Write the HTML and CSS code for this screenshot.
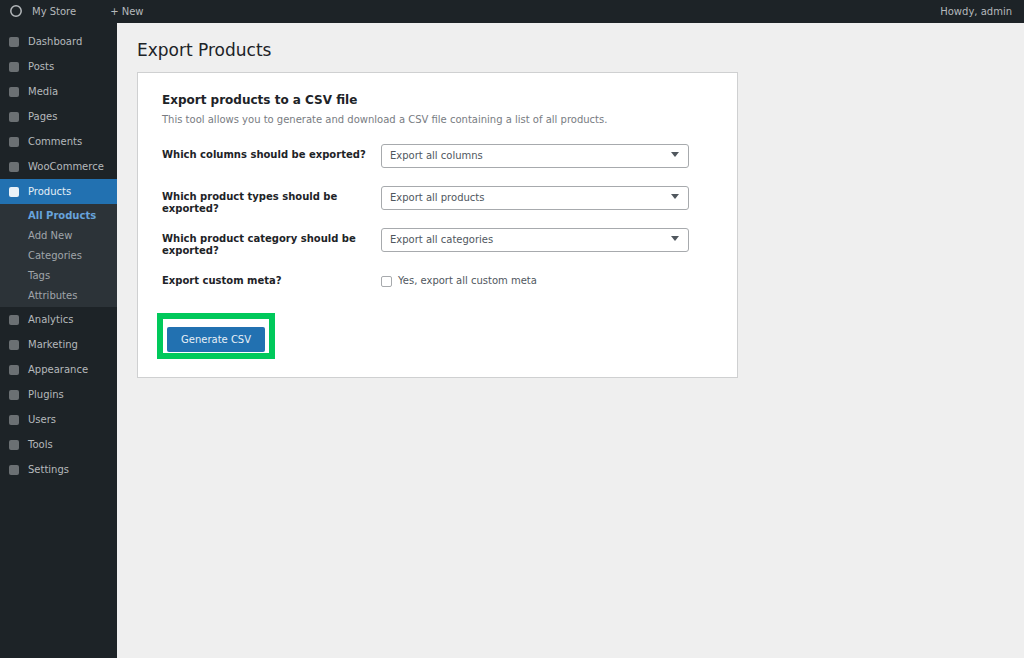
FILE: index.html
```html
<!DOCTYPE html>
<html lang="en">
<head>
<meta charset="utf-8">
<meta name="viewport" content="width=device-width, initial-scale=1">
<title>Export Products</title>
<link rel="stylesheet" href="styles.css">
</head>
<body>
<header class="topbar">
  <svg class="logo" viewBox="0 0 12 12" aria-hidden="true"><circle cx="6" cy="6" r="5.2" fill="none" stroke="currentColor" stroke-width="1.5"/></svg>
  <a class="site" href="#">My Store</a>
  <a class="new" href="#">+ New</a>
  <a class="account" href="#">Howdy, admin</a>
</header>
<div class="layout">
  <nav class="sidebar">
    <ul class="menu">
      <li><a class="item" href="#"><span class="icon"></span>Dashboard</a></li>
      <li><a class="item" href="#"><span class="icon"></span>Posts</a></li>
      <li><a class="item" href="#"><span class="icon"></span>Media</a></li>
      <li><a class="item" href="#"><span class="icon"></span>Pages</a></li>
      <li><a class="item" href="#"><span class="icon"></span>Comments</a></li>
      <li><a class="item" href="#"><span class="icon"></span>WooCommerce</a></li>
      <li>
        <a class="item active" href="#"><span class="icon"></span>Products</a>
        <ul class="submenu">
          <li><a class="subitem current" href="#">All Products</a></li>
          <li><a class="subitem" href="#">Add New</a></li>
          <li><a class="subitem" href="#">Categories</a></li>
          <li><a class="subitem" href="#">Tags</a></li>
          <li><a class="subitem" href="#">Attributes</a></li>
        </ul>
      </li>
      <li><a class="item" href="#"><span class="icon"></span>Analytics</a></li>
      <li><a class="item" href="#"><span class="icon"></span>Marketing</a></li>
      <li><a class="item" href="#"><span class="icon"></span>Appearance</a></li>
      <li><a class="item" href="#"><span class="icon"></span>Plugins</a></li>
      <li><a class="item" href="#"><span class="icon"></span>Users</a></li>
      <li><a class="item" href="#"><span class="icon"></span>Tools</a></li>
      <li><a class="item" href="#"><span class="icon"></span>Settings</a></li>
    </ul>
  </nav>
  <main class="content">
    <h1 class="title">Export Products</h1>
    <form class="card">
      <h2 class="heading">Export products to a CSV file</h2>
      <p class="intro">This tool allows you to generate and download a CSV file containing a list of all products.</p>
      <div class="fields">
        <div class="row">
          <label class="label" for="columns">Which columns should be exported?</label>
          <div class="control"><select class="select" id="columns"><option>Export all columns</option></select></div>
        </div>
        <div class="row">
          <label class="label" for="types">Which product types should be exported?</label>
          <div class="control"><select class="select" id="types"><option>Export all products</option></select></div>
        </div>
        <div class="row">
          <label class="label" for="category">Which product category should be exported?</label>
          <div class="control"><select class="select" id="category"><option>Export all categories</option></select></div>
        </div>
        <div class="row">
          <span class="label" id="meta-label">Export custom meta?</span>
          <label class="check"><input class="checkbox" type="checkbox" aria-describedby="meta-label">Yes, export all custom meta</label>
        </div>
      </div>
      <div class="highlight"><button class="button" type="button">Generate CSV</button></div>
    </form>
  </main>
</div>
</body>
</html>
```
FILE: styles.css
```css
* {
  box-sizing: border-box;
}

body {
  margin: 0;
  min-height: 100vh;
  display: flex;
  flex-direction: column;
  background: #efefef;
  color: #1d2327;
  font-family: "DejaVu Sans", Verdana, sans-serif;
  font-size: 10px;
}

a {
  color: inherit;
  text-decoration: none;
}

ul {
  list-style: none;
  margin: 0;
  padding: 0;
}

.topbar {
  display: flex;
  align-items: center;
  height: 23px;
  padding: 0 12px 0 10px;
  background: #1d2327;
  color: #b5b9bc;
}

.logo {
  width: 12px;
  height: 12px;
  margin: 0 10px 2px 0;
}

.new {
  margin-left: 34px;
}

.account {
  margin-left: auto;
}

.layout {
  flex: 1;
  display: flex;
}

.sidebar {
  flex: none;
  width: 117px;
  padding-top: 6px;
  background: #1d2327;
  color: #b5b9bc;
}

.item {
  display: flex;
  align-items: center;
  gap: 9px;
  height: 25px;
  padding-left: 9px;
}

.icon {
  width: 10px;
  height: 10px;
  border-radius: 2px;
  background: #6b7073;
}

.active {
  background: #2271b1;
  color: #e6eff6;
}

.active .icon {
  background: #e9f1f7;
}

.submenu {
  padding: 2px 0 1px;
  background: #2c3338;
  color: #a0a5aa;
}

.subitem {
  display: block;
  padding-left: 28px;
  line-height: 20px;
}

.current {
  color: #67a3dc;
  font-weight: bold;
}

.content {
  flex: 1;
  padding: 17px 20px;
}

.title {
  margin: 0 0 11px;
  font-size: 17px;
  font-weight: normal;
  line-height: 21px;
}

.card {
  max-width: 601px;
  padding: 19px 24px 18px;
  border: 1px solid #cfd0d1;
  background: #fff;
}

.heading {
  margin: 0;
  font-size: 12px;
  line-height: 16px;
}

.intro {
  margin: 5px 0 0;
  color: #787c82;
  line-height: 14px;
}

.fields {
  display: grid;
  gap: 13px;
  margin-top: 17px;
}

.row {
  display: grid;
  grid-template-columns: 208px minmax(0, 308px);
  column-gap: 11px;
  align-items: start;
  min-height: 29px;
}

.label {
  padding-top: 5px;
  font-weight: bold;
  line-height: 12px;
}

.select {
  display: block;
  width: 100%;
  height: 24px;
  padding: 0 8px 1px;
  appearance: none;
  border: 1px solid #a7aaad;
  border-radius: 3px;
  background: #fff;
  color: #50575e;
  font: inherit;
}

.control {
  position: relative;
}

.control::after {
  content: "";
  position: absolute;
  top: 8px;
  right: 10px;
  border: 4px solid transparent;
  border-top: 5px solid #50575e;
  border-bottom: 0;
  pointer-events: none;
}

.check {
  display: flex;
  align-items: center;
  gap: 6px;
  padding-top: 5px;
  color: #50575e;
  line-height: 12px;
}

.checkbox {
  width: 11px;
  height: 11px;
  margin: 0;
  appearance: none;
  border: 1px solid #a7aaad;
  border-radius: 2px;
  background: #fff;
}

.checkbox:checked {
  background: #2271b1;
}

.highlight {
  width: fit-content;
  margin: 14px 0 0 -5px;
  padding: 8px 4px 1px;
  border: 6px solid #00c95b;
}

.button {
  display: block;
  height: 25px;
  padding: 0 14px;
  border: 0;
  border-radius: 2px;
  background: #2271b1;
  color: #e6eff6;
  font: inherit;
}
```
